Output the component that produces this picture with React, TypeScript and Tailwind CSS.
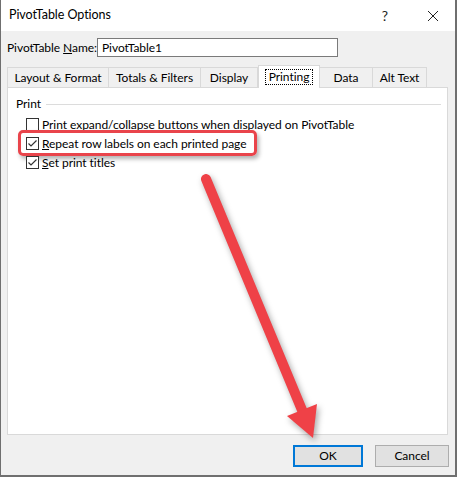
import React from 'react';

const font = { fontFamily: 'Lato, "Noto Sans", sans-serif' };

const Check = ({ checked }: { checked: boolean }) => (
  <div className="relative h-[13px] w-[13px] shrink-0 border border-[#333333] bg-white">
    {checked && (
      <svg viewBox="0 0 13 13" className="absolute -left-px -top-px h-[13px] w-[13px]">
        <path d="M2.5 6.5 L5 9 L10.5 3.5" fill="none" stroke="#333333" strokeWidth="1.2" />
      </svg>
    )}
  </div>
);

const tabs = [
  { label: 'Layout & Format', w: 'w-[102px]' },
  { label: 'Totals & Filters', w: 'w-[92px]' },
  { label: 'Display', w: 'w-[57px]' },
  { label: 'Printing', w: 'w-[62px]', active: true },
  { label: 'Data', w: 'w-[53px]' },
  { label: 'Alt Text', w: 'w-[54px]' },
];

export default function App() {
  return (
    <div
      className="relative flex h-[477px] w-[457px] flex-col border-b-2 border-l border-r-2 border-[#6f6f6f] bg-[#f0f0f0] text-[12px] tracking-[-0.05px] text-black"
      style={font}
    >
      {/* Title bar */}
      <div className="flex h-[31px] shrink-0 items-center bg-white pl-[8px]">
        <span className="flex-1 text-[12.5px]">PivotTable Options</span>
        <span className="mr-[40px] text-[14px] text-[#222]">?</span>
        <svg viewBox="0 0 10 10" className="mr-[17px] h-[10px] w-[10px]">
          <path d="M0 0 L10 10 M10 0 L0 10" stroke="#222" strokeWidth="1" />
        </svg>
      </div>

      {/* Name row */}
      <div className="mt-[7px] flex h-[19px] items-center pl-[6px]">
        <span className="w-[90px] shrink-0 whitespace-nowrap">
          PivotTable <span className="underline">N</span>ame:
        </span>
        <div className="flex h-[19px] w-[241px] items-center border border-[#7a7a7a] bg-white pl-[4px]">
          PivotTable1
        </div>
      </div>

      {/* Tabs */}
      <div className="mt-[9px] flex h-[21px] items-end whitespace-nowrap pl-[6px]">
        {tabs.map((t) =>
          t.active ? (
            <div
              key={t.label}
              className={`${t.w} relative z-10 -mb-px flex h-[23px] shrink-0 items-center justify-center border border-b-0 border-[#d9d9d9] bg-white`}
            >
              <span className="border border-dotted border-black px-[3px] leading-[14px]">{t.label}</span>
            </div>
          ) : (
            <div
              key={t.label}
              className={`${t.w} flex h-[20px] shrink-0 items-center justify-center border border-b-0 border-l-0 border-[#d9d9d9] first:border-l`}
            >
              {t.label}
            </div>
          )
        )}
      </div>

      {/* Panel */}
      <div className="ml-[6px] mr-[7px] h-[348px] border border-[#d9d9d9] bg-white pl-[8px] pt-[7px]">
        <div className="flex items-center gap-[5px]">
          <span>Print</span>
          <div className="mr-[6px] h-px flex-1 bg-[#dcdcdc]" />
        </div>
        <div className="mt-[2px] flex flex-col pl-[10px]">
          <div className="flex h-[19px] items-center gap-[3px]">
            <Check checked={false} />
            <span>Print expand/collapse buttons when displayed on PivotTable</span>
          </div>
          <div className="relative flex h-[19px] items-center gap-[3px]">
            <div className="absolute -left-[8px] -top-[4px] h-[26px] w-[239px] rounded-[5px] border-[3px] border-[#e9444b] shadow-[2px_3px_4px_rgba(0,0,0,0.3)]" />
            <Check checked />
            <span>
              <span className="underline">R</span>epeat row labels on each printed page
            </span>
          </div>
          <div className="flex h-[19px] items-center gap-[3px]">
            <Check checked />
            <span>
              <span className="underline">S</span>et print titles
            </span>
          </div>
        </div>
      </div>

      {/* Buttons */}
      <div className="mt-[10px] flex justify-end gap-[12px] pr-[6px]">
        <button className="h-[22px] w-[70px] border-2 border-[#0078d7] bg-[#e1e1e1]">OK</button>
        <button className="h-[22px] w-[74px] border border-[#adadad] bg-[#e1e1e1]">Cancel</button>
      </div>

      {/* Annotation arrow */}
      <svg
        className="pointer-events-none absolute -left-px top-0 h-[477px] w-[457px] drop-shadow-[2px_3px_3px_rgba(0,0,0,0.35)]"
        viewBox="0 0 457 477"
      >
        <line x1="206" y1="179" x2="302" y2="410" stroke="#ef4147" strokeWidth="10" strokeLinecap="round" />
        <polygon points="287,416 317,404 313,438" fill="#ef4147" />
      </svg>
    </div>
  );
}
